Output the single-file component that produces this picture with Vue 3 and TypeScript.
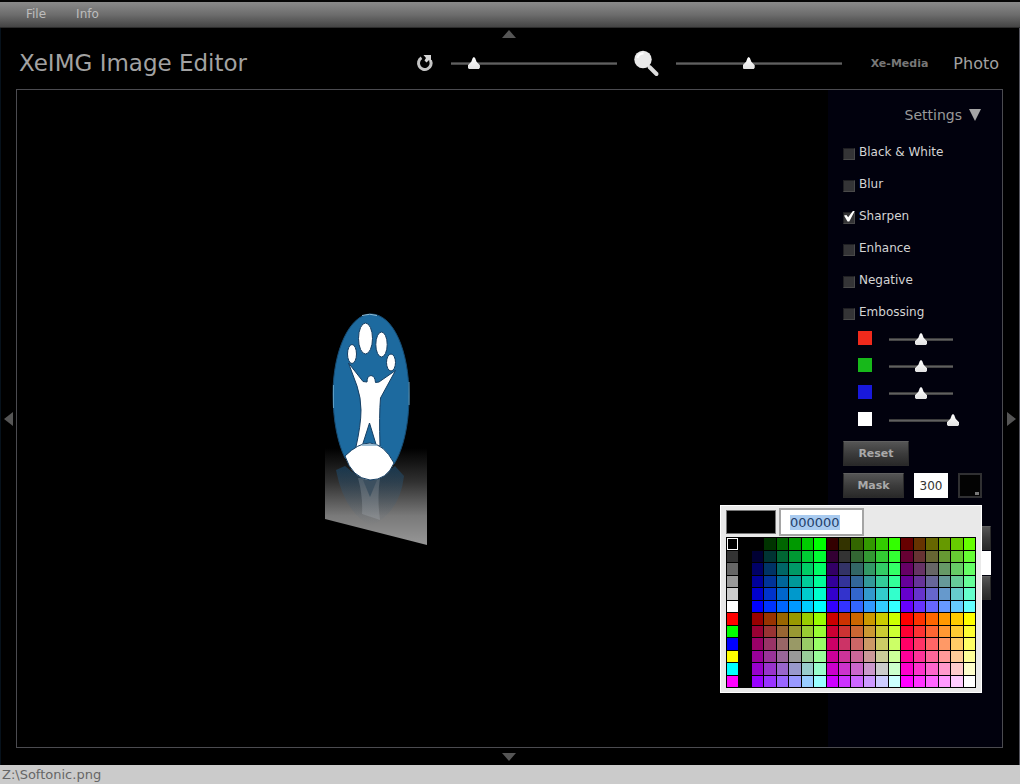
<script setup lang="ts">
import { onMounted, ref } from 'vue'

interface Effect {
  id: string
  label: string
  on: boolean
}

interface Channel {
  id: string
  label: string
  value: number
}

const effects = ref<Effect[]>([
  { id: 'bw', label: 'Black & White', on: false },
  { id: 'blur', label: 'Blur', on: false },
  { id: 'sharpen', label: 'Sharpen', on: true },
  { id: 'enhance', label: 'Enhance', on: false },
  { id: 'negative', label: 'Negative', on: false },
  { id: 'embossing', label: 'Embossing', on: false },
])

const channels = ref<Channel[]>([
  { id: 'red', label: 'Red', value: 50 },
  { id: 'green', label: 'Green', value: 50 },
  { id: 'blue', label: 'Blue', value: 50 },
  { id: 'alpha', label: 'Alpha', value: 100 },
])

const rotation = ref(14)
const zoom = ref(44)
const maskSize = ref('300')
const hex = ref('000000')
const hexInput = ref<HTMLInputElement | null>(null)

const basics = [
  '000000', '333333', '666666', '999999', 'cccccc', 'ffffff',
  'ff0000', '00ff00', '0000ff', 'ffff00', '00ffff', 'ff00ff',
]
const steps = ['00', '33', '66', '99', 'cc', 'ff']

// Web-safe cube: three red levels side by side, the brighter three below.
function buildPalette(): string[] {
  const cells: string[] = []
  for (let row = 0; row < 12; row++) {
    cells.push(basics[row], '000000')
    const redOffset = row < 6 ? 0 : 3
    for (let block = 0; block < 3; block++) {
      for (let green = 0; green < 6; green++) {
        cells.push(steps[block + redOffset] + steps[green] + steps[row % 6])
      }
    }
  }
  return cells
}

const palette = buildPalette()

onMounted(() => {
  hexInput.value?.focus()
  hexInput.value?.select()
})
</script>

<template>
  <div class="app">
    <nav class="menubar">
      <button type="button">File</button>
      <button type="button">Info</button>
    </nav>

    <div class="workspace">
      <button class="edge horizontal top" type="button" aria-label="Hide toolbar">
        <svg width="14" height="8" viewBox="0 0 14 8"><path d="M7 0 14 8H0z" /></svg>
      </button>

      <header class="toolbar">
        <h1>XeIMG Image Editor</h1>
        <div class="tools">
          <button class="icon" type="button" aria-label="Reset rotation">
            <svg width="19" height="20" viewBox="0 0 19 20">
              <path d="M5.500 4.800A6.300 6.300 0 1 0 14.500 7.500" fill="none" stroke="#c4c4c4" stroke-width="3" />
              <path d="M7.500 2H15V9L12.800 7.200 10.500 9.500 8.500 7.500 10 5z" fill="#d6d6d6" />
            </svg>
          </button>
          <input v-model="rotation" class="slider" type="range" aria-label="Rotation" />
          <svg class="lens" width="27" height="28" viewBox="0 0 27 28" aria-hidden="true">
            <path d="M16.500 18 23.500 25" stroke="#dcdcdc" stroke-width="4" stroke-linecap="round" />
            <circle cx="10" cy="10.500" r="8.700" fill="#e9e9e9" />
            <path d="M4.500 9a6 6 0 0 1 6-4.500" stroke="#fff" stroke-width="2" fill="none" />
          </svg>
          <input v-model="zoom" class="slider" type="range" aria-label="Zoom" />
        </div>
        <a class="brand" href="#">Xe-Media</a>
        <a class="section" href="#">Photo</a>
      </header>

      <div class="middle">
        <button class="edge vertical" type="button" aria-label="Previous">
          <svg width="9" height="14" viewBox="0 0 9 14"><path d="M9 0V14L0 7z" /></svg>
        </button>

        <main class="stage">
          <div class="canvas">
            <svg class="picture" width="104" height="236" viewBox="324 310 104 236" role="img" aria-label="Softonic logo">
              <defs>
                <linearGradient id="floor" x1="0" y1="0" x2="0" y2="1">
                  <stop offset="0" stop-color="#8b8b8b" stop-opacity="0" />
                  <stop offset="0.35" stop-color="#8b8b8b" stop-opacity="0.35" />
                  <stop offset="0.7" stop-color="#8f8f8f" stop-opacity="0.85" />
                  <stop offset="1" stop-color="#979797" />
                </linearGradient>
                <linearGradient id="fade" x1="0" y1="0" x2="0" y2="1">
                  <stop offset="0" stop-color="#174a70" stop-opacity="0.6" />
                  <stop offset="1" stop-color="#59697a" stop-opacity="0" />
                </linearGradient>
              </defs>
              <path d="M325 448H427V545L325 519z" fill="url(#floor)" />
              <path d="M345 466Q370 490 395 466L404 476Q400 512 371 526Q344 512 336 470z" fill="url(#fade)" />
              <path d="M358 478H380Q377 496 380 520L362 514Q363 496 358 478z" fill="#b5bcc2" opacity="0.25" />
              <path d="M363 480H377L370 497z" fill="#33485a" opacity="0.7" />
              <path
                d="M371 314C393 314 409 350 409 396C409 425 403 450 394 464L370 472L345 458C338 444 333 421 333 394C333 350 350 314 371 314z"
                fill="#1d6a9f"
                stroke="#174c73"
              />
              <path d="M362 315.500Q370 313 377 315.500" fill="none" stroke="#8fbdd6" />
              <path d="M333.500 385V408M409 382V405" stroke="#5d9cc1" />
              <g fill="#fff" stroke="#153e63">
                <ellipse cx="352" cy="354" rx="4.500" ry="9.500" />
                <ellipse cx="365.500" cy="338.500" rx="7" ry="15.500" />
                <ellipse cx="381.500" cy="344.500" rx="5.700" ry="12.500" />
                <ellipse cx="391" cy="362.500" rx="4.500" ry="8.500" />
                <path d="M348.500 363L363 381.500L367 382Q367 376 371 375.500Q375 376 375.500 382.500L379 382L395.500 370.500L380.500 398Q379 415 380 446H376.500L369.500 423L361.500 448L355.500 449Q361 425 361 410Q361 398 357 386z" />
                <path d="M345 456Q358 443 370 443Q384 444 394 463Q387 480 370 480Q352 478 345 456z" />
              </g>
              <path d="M362 445H377" stroke="#7fa9c4" stroke-width="1.500" />
            </svg>
          </div>

          <aside class="settings">
            <button class="heading" type="button">
              <span>Settings</span>
              <svg width="12" height="12" viewBox="0 0 12 12" aria-hidden="true"><path d="M0 0H12L6 12z" fill="#a5a5a5" /></svg>
            </button>

            <div class="effects">
              <label v-for="effect in effects" :key="effect.id">
                <input v-model="effect.on" type="checkbox" />
                <span>{{ effect.label }}</span>
              </label>
            </div>

            <div class="channels">
              <label v-for="channel in channels" :key="channel.id">
                <span class="chip" :class="channel.id"></span>
                <input v-model="channel.value" class="slider" type="range" :aria-label="channel.label" />
              </label>
            </div>

            <div class="actions">
              <button class="push reset" type="button">Reset</button>
            </div>
            <div class="actions">
              <button class="push mask" type="button">Mask</button>
              <input v-model="maskSize" class="size" type="text" aria-label="Mask size" />
              <button class="well" type="button" aria-label="Mask colour"></button>
            </div>

            <div class="more">
              <button class="push" type="button" aria-label="Apply"></button>
              <input type="text" aria-label="Amount" />
              <button class="push" type="button" aria-label="Save"></button>
            </div>
          </aside>

          <div class="picker" role="dialog" aria-label="Colour picker">
            <div class="picker-head">
              <span class="current" :style="{ backgroundColor: '#' + hex }"></span>
              <input ref="hexInput" v-model="hex" type="text" aria-label="Hex colour" spellcheck="false" />
            </div>
            <div class="palette">
              <button
                v-for="(cell, index) in palette"
                :key="index"
                type="button"
                :class="{ chosen: index === 0 }"
                :aria-label="'#' + cell"
                :style="{ backgroundColor: '#' + cell }"
                @click="hex = cell"
              ></button>
            </div>
          </div>
        </main>

        <button class="edge vertical" type="button" aria-label="Next">
          <svg width="9" height="14" viewBox="0 0 9 14"><path d="M0 0V14L9 7z" /></svg>
        </button>
      </div>

      <button class="edge horizontal bottom" type="button" aria-label="Show tray">
        <svg width="14" height="8" viewBox="0 0 14 8"><path d="M0 0H14L7 8z" /></svg>
      </button>
    </div>

    <footer class="status">Z:\Softonic.png</footer>
  </div>
</template>

<style>
body {
  background: #000;
}
</style>

<style scoped>
.app {
  display: flex;
  flex-direction: column;
  min-height: 100vh;
  box-sizing: border-box;
  border-top: 2px solid #050505;
  background: #000;
  color: #a6a6a6;
  font-family: Verdana, "DejaVu Sans", sans-serif;
  font-size: 12px;
}

.app *,
.app *::before {
  box-sizing: border-box;
}

button,
input {
  margin: 0;
  padding: 0;
  border: 0;
  border-radius: 0;
  background: none;
  color: inherit;
  font: inherit;
  outline: none;
}

.menubar {
  display: flex;
  gap: 30px;
  height: 26px;
  padding: 0 26px 1px;
  border-bottom: 1px solid #2c2c2c;
  background: linear-gradient(#8a8a8a, #6d6d6d 50%, #444);
  color: #bdbdbd;
}

.workspace {
  flex: 1;
  display: flex;
  flex-direction: column;
  border-left: 1px solid #06111b;
  border-right: 1px solid #55555e;
}

.edge {
  display: flex;
  justify-content: center;
  align-items: center;
}

.edge svg {
  fill: #555;
}

.horizontal {
  padding-right: 3px;
}

.horizontal.top {
  height: 12px;
}

.horizontal.bottom {
  height: 17px;
}

.toolbar {
  display: flex;
  align-items: center;
  height: 49px;
  padding: 0 20px 3px 18px;
}

h1 {
  margin: 0 auto 0 0;
  font-size: 23px;
  font-weight: 400;
  color: #a2a2a2;
}

.tools {
  display: flex;
  align-items: center;
  gap: 10px;
}

.icon,
.lens {
  display: block;
}

.icon svg {
  display: block;
}

.slider {
  appearance: none;
  width: 178px;
  height: 14px;
  background: linear-gradient(#2a2a2a, #606060 50%, #383838) center / calc(100% - 12px) 3px no-repeat;
}

.slider::-webkit-slider-thumb {
  appearance: none;
  width: 12px;
  height: 12px;
  background: linear-gradient(#fff, #e2e2e2);
  clip-path: polygon(50% 0, 60% 8%, 72% 40%, 100% 68%, 100% 90%, 92% 100%, 8% 100%, 0 90%, 0 68%, 28% 40%, 40% 8%);
}

a {
  text-decoration: none;
}

.brand {
  margin: 0 25px 0 23px;
  color: #777;
  font-size: 11px;
  font-weight: 700;
}

.section {
  color: #a2a2a2;
  font-size: 16px;
}

.middle {
  flex: 1;
  display: grid;
  grid-template-columns: 15px 1fr 16px;
}

.stage {
  position: relative;
  display: flex;
  border: 1px solid #4b4b50;
}

.canvas {
  position: relative;
  flex: 1;
}

.picture {
  position: absolute;
  left: 307px;
  top: 220px;
}

.settings {
  display: flex;
  flex-direction: column;
  width: 174px;
  padding: 16px 11px 0 15px;
  background: #01010d;
  color: #d4d4d4;
}

.heading {
  display: flex;
  align-items: center;
  align-self: flex-end;
  gap: 7px;
  height: 18px;
  margin-right: 10px;
  color: #9a9a9a;
  font-size: 14px;
}

.effects {
  display: grid;
  grid-auto-rows: 32px;
  padding-top: 12px;
}

.effects label {
  display: flex;
  align-items: center;
  gap: 4px;
}

.effects span {
  line-height: 16px;
  padding-bottom: 1px;
}

input[type="checkbox"] {
  position: relative;
  appearance: none;
  width: 12px;
  height: 12px;
  margin-top: 3px;
  border: 1px solid #1f1f22;
  border-right-color: #4a4a4a;
  border-bottom-color: #4a4a4a;
  background: #343436;
}

input[type="checkbox"]:checked::before {
  content: "";
  position: absolute;
  left: 0;
  top: -2px;
  width: 11px;
  height: 11px;
  background: #fff;
  clip-path: polygon(0 45%, 22% 40%, 38% 62%, 84% 0, 100% 0, 48% 100%, 32% 100%);
}

.channels {
  display: grid;
  grid-auto-rows: 27px;
  margin-top: -4px;
  padding: 0 0 9px 15px;
}

.channels label {
  display: flex;
  align-items: center;
  gap: 11px;
}

.channels .slider {
  width: 76px;
  margin-top: 3px;
}

.chip {
  width: 14px;
  height: 14px;
}

.red {
  background: #f02a1c;
}

.green {
  background: #17b81a;
}

.blue {
  background: #1818dc;
}

.alpha {
  background: #fff;
}

.actions {
  display: flex;
  height: 25px;
  margin-bottom: 7px;
}

.push {
  border: 1px solid #2a2a2a;
  border-top-color: #606060;
  background: linear-gradient(#555, #3c3c3c 50%, #292929);
  color: #a9a9a9;
  font-size: 11px;
  font-weight: 700;
}

.reset {
  width: 66px;
}

.mask {
  width: 61px;
}

.size {
  width: 34px;
  margin-left: 10px;
  background: #fff;
  color: #333;
  text-align: center;
}

.well {
  width: 24px;
  margin-left: 10px;
  border: 2px solid #303032;
  background: linear-gradient(#777, #777) right 1px bottom 1px / 4px 3px no-repeat #030303;
}

.more {
  display: flex;
  flex-direction: column;
  gap: 1px;
  padding-top: 21px;
}

.more > * {
  height: 24px;
}

.more input {
  background: #fff;
}

.picker {
  position: absolute;
  right: 20px;
  top: 415px;
  width: 262px;
  padding: 2px 5px 4px;
  border: 1px solid #fff;
  background: #e9e9e9;
}

.picker-head {
  display: flex;
  align-items: center;
  gap: 3px;
  height: 28px;
  margin-bottom: 1px;
}

.current {
  width: 50px;
  height: 24px;
  border: 1px solid #777;
}

.picker-head input {
  width: 85px;
  height: 28px;
  padding: 0 9px;
  border: 2px solid #a4a4a4;
  background: #fff;
  color: #24406a;
  font-size: 13px;
}

.picker-head input::selection {
  background: #a9cbf0;
  color: #24406a;
}

.palette {
  display: grid;
  grid-template-columns: repeat(20, 1fr);
  grid-template-rows: repeat(12, 1fr);
  gap: 1px;
  height: 151px;
  border: 1px solid #000;
  background: #000;
}

.palette button {
  min-height: 0;
}

.palette .chosen {
  border: 1px solid #fff;
}

.status {
  height: 19px;
  padding-left: 2px;
  background: #cbcbcb;
  color: #666;
  font-size: 13px;
  line-height: 19px;
}
</style>
